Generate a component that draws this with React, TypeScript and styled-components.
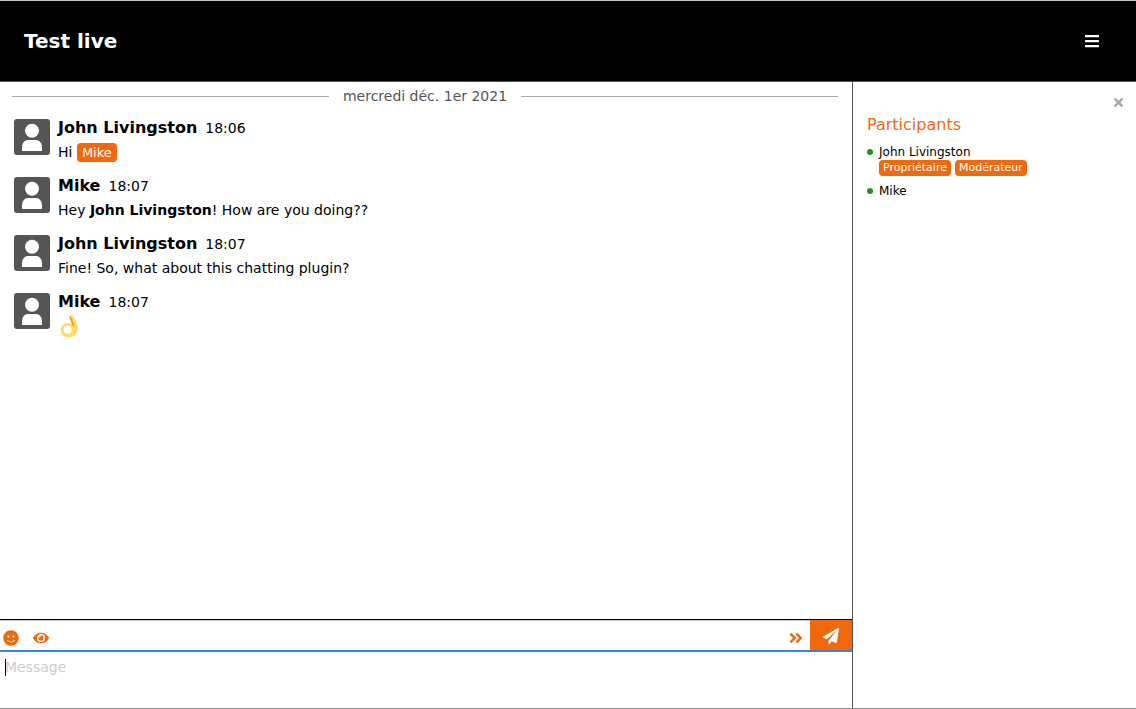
import React from "react";
import styled, { createGlobalStyle } from "styled-components";
import { FaAngleDoubleRight, FaBars, FaEye, FaPaperPlane, FaSmile, FaTimes } from "react-icons/fa";

const orange = "#f2690d";

const GlobalStyle = createGlobalStyle`
  *, *::before, *::after { box-sizing: border-box; }
  body {
    margin: 0;
    background: #fff;
    color: #000;
    font-family: "DejaVu Sans", sans-serif;
    font-size: 14px;
  }
  button { font: inherit; }
`;

const Page = styled.div`
  display: flex;
  flex-direction: column;
  height: 100vh;
  border-top: 1px solid #c9c5bd;
  border-bottom: 1px solid #8a8787;
`;

const Header = styled.header`
  display: flex;
  align-items: center;
  justify-content: space-between;
  flex: none;
  height: 81px;
  padding: 0 36px 0 24px;
  background: #000;
  color: #fff;
  border-bottom: 1px solid #555;
`;

const Title = styled.h1`
  margin: 0;
  font-size: 20px;
  line-height: 24px;
`;

const IconButton = styled.button<{ $color: string; $size: number }>`
  display: flex;
  align-items: center;
  justify-content: center;
  padding: 0;
  border: 0;
  background: none;
  color: ${(p) => p.$color};
  font-size: ${(p) => p.$size}px;
`;

const Body = styled.div`
  display: flex;
  flex: 1;
  min-height: 0;
`;

const Chat = styled.main`
  display: flex;
  flex-direction: column;
  flex: 1;
  min-width: 0;
`;

const Messages = styled.section`
  flex: 1;
  min-height: 0;
  overflow: auto;
`;

const DayDivider = styled.div`
  display: flex;
  align-items: center;
  gap: 14px;
  margin: 4px 14px 10px 12px;
  line-height: 20px;
  color: #555;

  &::before, &::after {
    content: "";
    flex: 1;
    border-top: 1px solid #aaa;
  }
`;

const MessageRow = styled.article`
  display: flex;
  gap: 8px;
  height: 58px;
  padding: 3px 14px 0;
`;

const Avatar = styled.svg`
  flex: none;
  width: 36px;
  height: 36px;
`;

const MessageHead = styled.div`
  display: flex;
  align-items: baseline;
  gap: 8px;
  line-height: 18px;
`;

const Author = styled.strong`
  font-size: 16px;
`;

const MessageText = styled.p`
  display: flow-root;
  margin: 4px 0 0;
  line-height: 22px;
`;

const Mention = styled.span`
  display: inline-block;
  padding: 0 5px;
  border-radius: 4px;
  background: ${orange};
  color: #fff;
  font-size: 13px;
  line-height: 19px;
`;

const Emoji = styled.svg`
  display: block;
  width: 22px;
  height: 24px;
`;

const Composer = styled.form`
  flex: none;
  border-top: 1px solid #000;
`;

const Toolbar = styled.div`
  display: flex;
  align-items: stretch;
  justify-content: space-between;
  height: 30px;
  border-top: 1px solid #ccc;
`;

const ToolGroup = styled.div`
  display: flex;
  align-items: center;
  gap: 14px;
  padding: 4px 0 0 3px;
`;

const SendButton = styled.button`
  display: flex;
  align-items: center;
  justify-content: center;
  width: 42px;
  height: 30px;
  margin: -1px 0 0 6px;
  padding: 1px 0 0;
  border: 0;
  background: ${orange};
  color: #fff;
  font-size: 16px;
`;

const Right = styled.div`
  display: flex;
`;

const InputArea = styled.div`
  position: relative;
  border-top: 2px solid #3584e4;
`;

const Caret = styled.span`
  position: absolute;
  top: 7px;
  left: 5px;
  width: 1px;
  height: 17px;
  background: #000;
`;

const MessageInput = styled.textarea`
  display: block;
  width: 100%;
  height: 56px;
  padding: 5px;
  border: 0;
  outline: 0;
  resize: none;
  font: inherit;
  line-height: 20px;
  caret-color: transparent;

  &::placeholder { color: #ccc; opacity: 1; }
`;

const Sidebar = styled.aside`
  flex: none;
  width: 25%;
  padding: 14px;
  border-left: 1px solid #555;
`;

const CloseRow = styled.div`
  display: flex;
  justify-content: flex-end;
  margin-right: -3px;
`;

const SidebarTitle = styled.h2`
  margin: 6px 0 9px;
  font-size: 16px;
  font-weight: normal;
  line-height: 20px;
  color: ${orange};
`;

const ParticipantList = styled.ul`
  display: flex;
  flex-direction: column;
  gap: 7px;
  margin: 0;
  padding: 0;
  list-style: none;
`;

const Participant = styled.li`
  display: flex;
  gap: 6px;
  font-size: 12px;
  line-height: 16px;
`;

const Status = styled.span`
  flex: none;
  width: 6px;
  height: 6px;
  margin-top: 5px;
  border-radius: 50%;
  background: #1c990c;
`;

const Badges = styled.div`
  display: flex;
  gap: 4px;
`;

const Badge = styled.span`
  padding: 0 4px;
  border-radius: 4px;
  background: ${orange};
  color: #fff;
  font-size: 11px;
  line-height: 16px;
`;

function Person() {
  return (
    <Avatar viewBox="0 0 36 36" aria-hidden="true">
      <rect width="36" height="36" rx="3" fill="#555" />
      <circle cx="18" cy="11.700" r="7" fill="#fff" />
      <path d="M8 32v-3c0-5 2.500-8 6-8h8c3.500 0 6 3 6 8v3z" fill="#fff" />
    </Avatar>
  );
}

function OkHand() {
  return (
    <Emoji viewBox="0 0 22 24" role="img" aria-label="OK">
      <path
        d="M12 .4c1.300-.9 2.500-.3 3.300 1 2 3.300 4.500 7.500 4.400 12.100-.1 5.300-4 9-8.900 9-4.400 0-8-3-8-7.500 0-4 3-6.700 6.500-6.700 1.800 0 3.300.4 4.700 1.400C13.500 7 12 4.500 11.500 2.200 11.300 1.400 11.500.8 12 .4z"
        fill="#ffdc5d"
      />
      <circle cx="9.600" cy="14.700" r="4" fill="#fff" />
      <path d="M11.700 1.300c.6 0 1 .4 1.500 1.400l3 6.500c.3.900.2 1.700-.4 2.300l-1.700-1.800C13.300 7 12 4.500 11.500 2.200z" fill="#ef9645" />
    </Emoji>
  );
}

type ChatMessage = { author: string; time: string; body: React.ReactNode };

const messages: ChatMessage[] = [
  { author: "John Livingston", time: "18:06", body: <>Hi <Mention>Mike</Mention></> },
  { author: "Mike", time: "18:07", body: <>Hey <strong>John Livingston</strong>! How are you doing??</> },
  { author: "John Livingston", time: "18:07", body: "Fine! So, what about this chatting plugin?" },
  { author: "Mike", time: "18:07", body: <OkHand /> },
];

const participants = [
  { name: "John Livingston", roles: ["Propriétaire", "Modérateur"] },
  { name: "Mike", roles: [] },
];

export default function App() {
  return (
    <>
      <GlobalStyle />
      <Page>
        <Header>
          <Title>Test live</Title>
          <IconButton $color="#fff" $size={16} aria-label="Menu"><FaBars /></IconButton>
        </Header>
        <Body>
          <Chat>
            <Messages>
              <DayDivider>mercredi déc. 1er 2021</DayDivider>
              {messages.map((m, i) => (
                <MessageRow key={i}>
                  <Person />
                  <div>
                    <MessageHead><Author>{m.author}</Author><time>{m.time}</time></MessageHead>
                    <MessageText>{m.body}</MessageText>
                  </div>
                </MessageRow>
              ))}
            </Messages>
            <Composer>
              <Toolbar>
                <ToolGroup>
                  <IconButton type="button" $color={orange} $size={16} aria-label="Emoji"><FaSmile /></IconButton>
                  <IconButton type="button" $color={orange} $size={16} aria-label="Spoiler"><FaEye /></IconButton>
                </ToolGroup>
                <Right>
                  <ToolGroup>
                    <IconButton type="button" $color={orange} $size={16} aria-label="Participants"><FaAngleDoubleRight /></IconButton>
                  </ToolGroup>
                  <SendButton type="submit" aria-label="Send"><FaPaperPlane /></SendButton>
                </Right>
              </Toolbar>
              <InputArea>
                <MessageInput aria-label="Message" placeholder="Message" autoFocus />
                <Caret aria-hidden="true" />
              </InputArea>
            </Composer>
          </Chat>
          <Sidebar>
            <CloseRow>
              <IconButton $color="#a8a8a0" $size={13} aria-label="Close"><FaTimes /></IconButton>
            </CloseRow>
            <SidebarTitle>Participants</SidebarTitle>
            <ParticipantList>
              {participants.map((p) => (
                <Participant key={p.name}>
                  <Status />
                  <div>
                    {p.name}
                    {p.roles.length > 0 && <Badges>{p.roles.map((r) => <Badge key={r}>{r}</Badge>)}</Badges>}
                  </div>
                </Participant>
              ))}
            </ParticipantList>
          </Sidebar>
        </Body>
      </Page>
    </>
  );
}
